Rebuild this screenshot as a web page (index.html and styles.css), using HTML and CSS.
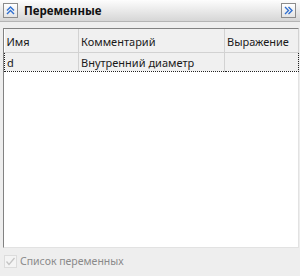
FILE: index.html
```html
<!DOCTYPE html>
<html lang="ru">
<head>
    <meta charset="UTF-8">
    <title>Переменные</title>
    <link rel="stylesheet" href="styles.css">
</head>
<body>
    <div class="panel">
        <div class="panel-header">
            <span class="tool-btn">
                <svg width="9" height="9" viewBox="0 0 9 9"><path d="M1 4.5 L4.5 1 L8 4.5 M1 8 L4.5 4.5 L8 8" fill="none" stroke="#2f6fd0" stroke-width="1.4"/></svg>
            </span>
            <span class="panel-title">Переменные</span>
            <span class="tool-btn tool-right">
                <svg width="9" height="9" viewBox="0 0 9 9"><path d="M1 1 L4.5 4.5 L1 8 M4.5 1 L8 4.5 L4.5 8" fill="none" stroke="#2f6fd0" stroke-width="1.4"/></svg>
            </span>
        </div>

        <div class="grid-box">
            <table class="vars">
                <colgroup>
                    <col class="c-name">
                    <col class="c-comment">
                    <col class="c-expr">
                </colgroup>
                <thead>
                    <tr>
                        <th>Имя</th>
                        <th>Комментарий</th>
                        <th>Выражение</th>
                    </tr>
                </thead>
                <tbody>
                    <tr class="row-focus">
                        <td>d</td>
                        <td>Внутренний диаметр</td>
                        <td></td>
                    </tr>
                </tbody>
            </table>
        </div>

        <label class="check">
            <span class="check-box">
                <svg width="11" height="11" viewBox="0 0 11 11"><path d="M1.5 5.5 L4 8.5 L9.5 2" fill="none" stroke="#c4c4c4" stroke-width="1.3"/></svg>
            </span>
            <span class="check-label">Список переменных</span>
        </label>
    </div>
</body>
</html>
```

FILE: styles.css
```css
body {
    margin: 0;
    background-color: #eeeeee;
    font-family: "Noto Sans", "DejaVu Sans", sans-serif;
    font-size: 11px;
    color: #1a1a1a;
}

.panel {
    width: 300px;
    height: 276px;
    display: flex;
    flex-direction: column;
}

.panel-header {
    height: 21px;
    display: flex;
    align-items: center;
    padding: 0 4px 0 3px;
    background: linear-gradient(#fdfdfd, #d6d6d6);
    border-bottom: 1px solid #b4b4b4;
}

.tool-btn {
    width: 13px;
    height: 13px;
    border: 1px solid #8c8c8c;
    background: linear-gradient(#ffffff, #e4e4e4);
    display: flex;
    align-items: center;
    justify-content: center;
}

.tool-right {
    margin-left: auto;
}

.panel-title {
    font-weight: bold;
    font-size: 11.5px;
    margin-left: 6px;
    color: #111;
}

.grid-box {
    margin: 6px 1px 0 3px;
    height: 218px;
    background-color: #fff;
    border: 1px solid #e2e2e2;
    border-top-color: #828282;
    border-left-color: #828282;
}

.vars {
    border-collapse: collapse;
    table-layout: fixed;
    width: 294px;
}

.c-name { width: 74px; }
.c-comment { width: 146px; }
.c-expr { width: 74px; }

.vars th {
    height: 22px;
    padding: 1px 0 0 2px;
    text-align: left;
    font-weight: normal;
    background-color: #f0f0f0;
    border-right: 1px solid #d2d2d2;
    border-bottom: 1px solid #d2d2d2;
    white-space: nowrap;
    overflow: hidden;
}

.vars td {
    height: 18px;
    padding: 0 0 0 2px;
    background-color: #f0f0f0;
    border-right: 1px solid #d2d2d2;
    white-space: nowrap;
    overflow: hidden;
}

.row-focus td {
    border-top: 1px dotted #222;
    border-bottom: 1px dotted #222;
}

.row-focus td:first-child {
    border-left: 1px dotted #222;
}

.row-focus td:last-child {
    border-right: 1px dotted #222;
}

.check {
    display: flex;
    align-items: center;
    margin: 6px 0 0 4px;
}

.check-box {
    width: 13px;
    height: 13px;
    display: flex;
    align-items: center;
    justify-content: center;
    border: 1px solid #dcdcdc;
    box-sizing: border-box;
    background-color: #f4f4f4;
}

.check-label {
    margin-left: 3px;
    font-size: 10.5px;
    color: #8a8a8a;
}
```
